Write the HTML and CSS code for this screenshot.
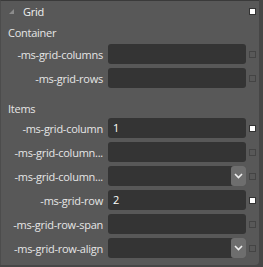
FILE: index.html
```html
<!DOCTYPE html>
<html lang="en">
<head>
    <meta charset="UTF-8">
    <title>Grid</title>
    <link rel="stylesheet" href="styles.css">
</head>
<body>
    <div class="panel">
        <!-- Panel header -->
        <div class="header">
            <svg class="twisty" width="5" height="5" viewBox="0 0 5 5"><polygon points="5,0 5,5 0,5" fill="#8c8c8c"/></svg>
            <span class="title">Grid</span>
            <span class="box on"></span>
        </div>

        <div class="group">Container</div>
        <div class="row">
            <label class="label">-ms-grid-columns</label>
            <div class="field"></div>
            <span class="box"></span>
        </div>
        <div class="row">
            <label class="label">-ms-grid-rows</label>
            <div class="field"></div>
            <span class="box"></span>
        </div>

        <div class="group items">Items</div>
        <div class="row">
            <label class="label">-ms-grid-column</label>
            <div class="field">1</div>
            <span class="box on"></span>
        </div>
        <div class="row">
            <label class="label">-ms-grid-column...</label>
            <div class="field"></div>
            <span class="box"></span>
        </div>
        <div class="row">
            <label class="label">-ms-grid-column...</label>
            <div class="field select"><span class="drop"><svg width="9" height="6" viewBox="0 0 9 6"><polyline points="1,1 4.5,4.5 8,1" fill="none" stroke="#f0f0f0" stroke-width="1.6"/></svg></span></div>
            <span class="box"></span>
        </div>
        <div class="row">
            <label class="label">-ms-grid-row</label>
            <div class="field">2</div>
            <span class="box on"></span>
        </div>
        <div class="row">
            <label class="label">-ms-grid-row-span</label>
            <div class="field"></div>
            <span class="box"></span>
        </div>
        <div class="row">
            <label class="label">-ms-grid-row-align</label>
            <div class="field select"><span class="drop"><svg width="9" height="6" viewBox="0 0 9 6"><polyline points="1,1 4.5,4.5 8,1" fill="none" stroke="#f0f0f0" stroke-width="1.6"/></svg></span></div>
            <span class="box"></span>
        </div>
    </div>
</body>
</html>
```

FILE: styles.css
```css
/* Dark property panel */
body {
    margin: 0;
    background-color: #464646;
    font-family: "Open Sans", "Noto Sans", sans-serif;
    font-size: 11px;
    letter-spacing: -0.25px;
    color: #e6e6e6;
}

.panel {
    width: 258px;
    height: 264px;
    background-color: #585858;
    border-top: 1px solid #3a3a3a;
    border-left: 1px solid #4c4c4c;
    border-bottom-right-radius: 4px;
}

.header {
    display: flex;
    align-items: center;
    height: 21px;
    padding-left: 8px;
}

.twisty {
    margin-right: 9px;
}

.title {
    flex: 1;
    color: #f0f0f0;
}

.box {
    width: 5px;
    height: 5px;
    border: 1px solid #444;
    margin-left: 3px;
}

.header .box {
    margin-right: 3px;
}

.box.on {
    background-color: #ffffff;
    border-color: #333;
}

.group {
    height: 22px;
    line-height: 22px;
    padding-left: 7px;
}

.group.items {
    margin-top: 8px;
    line-height: 25px;
}

.row {
    display: flex;
    align-items: center;
    height: 20px;
    margin-bottom: 4px;
}

.label {
    width: 102px;
    text-align: right;
    padding-right: 5px;
    white-space: nowrap;
}

.field {
    width: 133px;
    height: 20px;
    line-height: 20px;
    padding-left: 5px;
    background-color: #343434;
    border-radius: 3px;
    color: #ffffff;
    display: flex;
    justify-content: flex-end;
}

.field:not(.select) {
    justify-content: flex-start;
}

.drop {
    width: 15px;
    height: 20px;
    background-color: #6e6e6e;
    border-radius: 3px;
    display: flex;
    align-items: center;
    justify-content: center;
}
```
